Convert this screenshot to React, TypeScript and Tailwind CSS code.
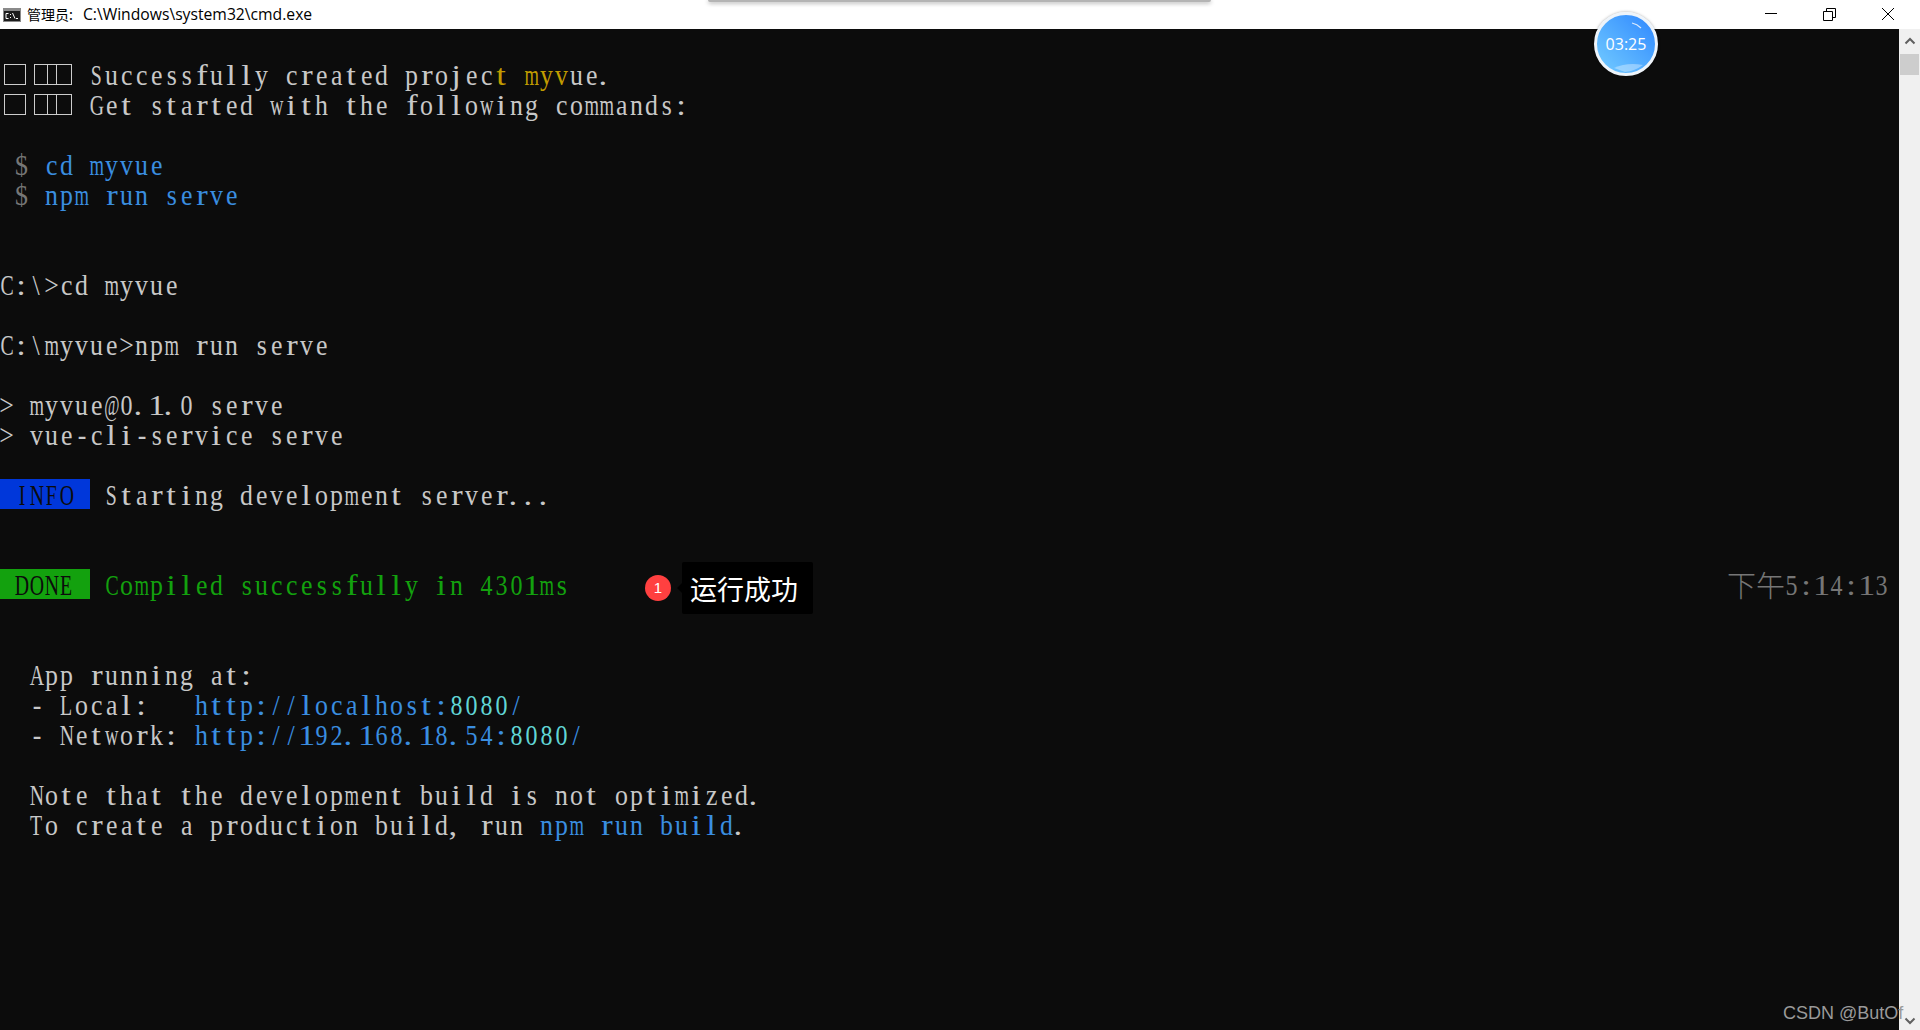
const GRAY = "text-[#c8c8c8]";
const BLUE = "text-[#3a8ee0]";
const TEAL = "text-[#61d6d6]";
const YELLOW = "text-[#c19c00]";
const DIM = "text-[#767676]";

type Run = { text: string; color?: string };

// console font is fixed-pitch, so every glyph is squeezed or stretched into its cell
function glyphScale(ch: string) {
  if (ch === "." || ch === ",") return "scale-x-[1.15] -translate-x-[5px]";
  if (ch === "@") return "scale-x-[0.55] -translate-x-px";
  if (ch === "m" || ch === "w") return "scale-x-[0.62] -translate-x-px";
  if (/[A-Z]/.test(ch)) return "scale-x-[0.66] -translate-x-px";
  if (/[il1jtfr:]/.test(ch)) return "scale-x-[1.15] -translate-x-px";
  if (/[0-9]/.test(ch)) return "scale-x-[0.8] -translate-x-px";
  return "scale-x-[0.86] -translate-x-px";
}

function Cells({ text, color = GRAY }: Run) {
  return (
    <>
      {text.split("").map((ch, i) => (
        <span key={i} className={`inline-flex w-[15px] justify-center whitespace-pre ${color}`}>
          <span className={`inline-block translate-y-px ${glyphScale(ch)}`}>{ch}</span>
        </span>
      ))}
    </>
  );
}

function Row({ runs, children }: { runs?: Run[]; children?: React.ReactNode }) {
  return (
    <div className="flex h-[30px] shrink-0 items-center leading-[30px]">
      {children}
      {runs?.map((r, i) => <Cells key={i} text={r.text} color={r.color} />)}
    </div>
  );
}

function Boxes() {
  return (
    <span className="flex w-[90px] shrink-0 pl-[4px]">
      <span className="h-[21px] w-[22px] border border-[#cccccc]" />
      <span className="ml-[8px] h-[21px] w-[14px] border border-[#cccccc]" />
      <span className="ml-[-1px] h-[21px] w-[10px] border-y border-[#cccccc]" />
      <span className="ml-[-1px] h-[21px] w-[16px] border border-[#cccccc]" />
    </span>
  );
}

function TimerBadge() {
  return (
    <div className="absolute left-[1594px] top-[12px] flex h-[64px] w-[64px] items-center justify-center rounded-full border-[3px] border-[#eef4fa] bg-gradient-to-tr from-[#74ccff] to-[#2f86ff] shadow-[0_0_3px_rgba(0,0,0,0.35)]">
      <svg className="absolute inset-0" viewBox="0 0 58 58" fill="none">
        <path d="M35 8 Q40 9 44 13" stroke="#ffffff" strokeWidth="1.2" strokeOpacity="0.8" />
        <path d="M17 53 Q30 47 46 50 Q38 56 28 57 Z" fill="#ffffff" fillOpacity="0.35" />
      </svg>
      <span className="relative font-['Open_Sans',sans-serif] text-[16px] text-white">03:25</span>
    </div>
  );
}

export default function App() {
  return (
    <div className="relative flex h-screen flex-col overflow-hidden bg-white">
      {/* Title bar */}
      <header className="flex h-[29px] shrink-0 items-center bg-white text-[#000]">
        <svg className="ml-[3px] shrink-0" width="18" height="14" viewBox="0 0 18 14">
          <rect x="0" y="0" width="18" height="14" fill="#8a8a8a" />
          <rect x="1" y="3" width="16" height="10" fill="#1c1c1c" />
          <path d="M5.5 5.5H3v5h2.5M7.5 6v1M7.5 9v1M9.5 5l2.5 5.5M13 10.5h2" stroke="#ffffff" strokeWidth="1" fill="none" />
        </svg>
        <span className="ml-[6px] font-['Noto_Sans_CJK_SC',sans-serif] text-[14px]">管理员:</span>
        <span className="ml-[10px] font-['Open_Sans',sans-serif] text-[15.7px]">C:\Windows\system32\cmd.exe</span>
        <svg className="ml-auto" width="155" height="29" viewBox="0 0 155 29" fill="none" stroke="#000000" strokeWidth="1">
          <path d="M0 13.5H12" />
          <path d="M58.5 11.5h9v9h-9z" />
          <path d="M61.5 11.5v-3h9v9h-3" />
          <path d="M117 8l12 12M129 8l-12 12" />
        </svg>
      </header>

      <div className="flex min-h-0 flex-1">
        {/* Console */}
        <main className="flex min-w-0 flex-1 flex-col overflow-hidden bg-[#0c0c0c] font-['Liberation_Serif',serif] text-[30px]">
          <Row />
          <Row runs={[{ text: "Successfully created projec" }, { text: "t myv", color: YELLOW }, { text: "ue." }]}>
            <Boxes />
          </Row>
          <Row runs={[{ text: "Get started with the following commands:" }]}>
            <Boxes />
          </Row>
          <Row />
          <Row runs={[{ text: " " }, { text: "$ ", color: DIM }, { text: "cd myvue", color: BLUE }]} />
          <Row runs={[{ text: " " }, { text: "$ ", color: DIM }, { text: "npm run serve", color: BLUE }]} />
          <Row />
          <Row />
          <Row runs={[{ text: "C:\\>cd myvue" }]} />
          <Row />
          <Row runs={[{ text: "C:\\myvue>npm run serve" }]} />
          <Row />
          <Row runs={[{ text: "> myvue@0.1.0 serve" }]} />
          <Row runs={[{ text: "> vue-cli-service serve" }]} />
          <Row />
          <Row>
            <span className="flex bg-[#0037da]">
              <Cells text=" INFO " color="text-[#0c0c0c]" />
            </span>
            <Cells text=" Starting development server..." />
          </Row>
          <Row />
          <Row />
          <Row>
            <span className="flex bg-[#13a10e]">
              <Cells text=" DONE " color="text-[#0c0c0c]" />
            </span>
            <Cells text=" Compiled successfully in 4301ms" color="text-[#13a10e]" />
            <span className="ml-auto flex items-center pr-[9px]">
              <span className={`font-['Noto_Sans_CJK_SC',sans-serif] text-[29px] font-light ${DIM}`}>下午</span>
              <Cells text="5:14:13" color={DIM} />
            </span>
          </Row>
          <Row />
          <Row />
          <Row runs={[{ text: "  App running at:" }]} />
          <Row runs={[{ text: "  - Local:   " }, { text: "http://localhost:", color: BLUE }, { text: "8080", color: TEAL }, { text: "/", color: BLUE }]} />
          <Row runs={[{ text: "  - Network: " }, { text: "http://192.168.18.54:", color: BLUE }, { text: "8080", color: TEAL }, { text: "/", color: BLUE }]} />
          <Row />
          <Row runs={[{ text: "  Note that the development build is not optimized." }]} />
          <Row runs={[{ text: "  To create a production build, run " }, { text: "npm run build", color: BLUE }, { text: "." }]} />
        </main>

        {/* Scrollbar */}
        <aside className="flex w-[21px] shrink-0 flex-col items-center justify-between bg-[#f0f0f0] pb-[5px] pt-[8px]">
          <div className="flex w-full flex-col items-center">
            <svg width="12" height="8" viewBox="0 0 12 8" fill="none" stroke="#606060" strokeWidth="2">
              <path d="M1.5 6.5L6 2l4.5 4.5" />
            </svg>
            <div className="mt-[9px] h-[21px] w-[19px] bg-[#cdcdcd]" />
          </div>
          <svg width="12" height="8" viewBox="0 0 12 8" fill="none" stroke="#606060" strokeWidth="2">
            <path d="M1.5 1.5L6 6l4.5-4.5" />
          </svg>
        </aside>
      </div>

      {/* Edge of a popup reaching in from above */}
      <div className="absolute left-[708px] top-0 h-[2px] w-[503px] rounded-b-[2px] bg-[#b4b4b4] shadow-[0_1px_4px_rgba(0,0,0,0.45)]" />

      <TimerBadge />

      {/* Annotation */}
      <div className="absolute left-[645px] top-[575px] flex h-[26px] w-[26px] items-center justify-center rounded-full bg-[#ff4040] font-['Liberation_Sans',sans-serif] text-[15px] text-white">
        1
      </div>
      <div className="absolute left-[682px] top-[562px] flex h-[52px] w-[131px] items-center rounded-[2px] bg-black pl-[8px] pt-[2px] font-['Noto_Sans_CJK_SC',sans-serif] text-[27px] text-white">
        <span className="absolute left-[-5px] top-[21px] h-0 w-0 border-y-[5px] border-r-[5px] border-y-transparent border-r-black" />
        运行成功
      </div>

      {/* Watermark */}
      <span className="absolute left-[1783px] top-[1000px] font-['Liberation_Sans',sans-serif] text-[18px] text-[#9a9a9a]">CSDN @ButOf</span>
    </div>
  );
}
